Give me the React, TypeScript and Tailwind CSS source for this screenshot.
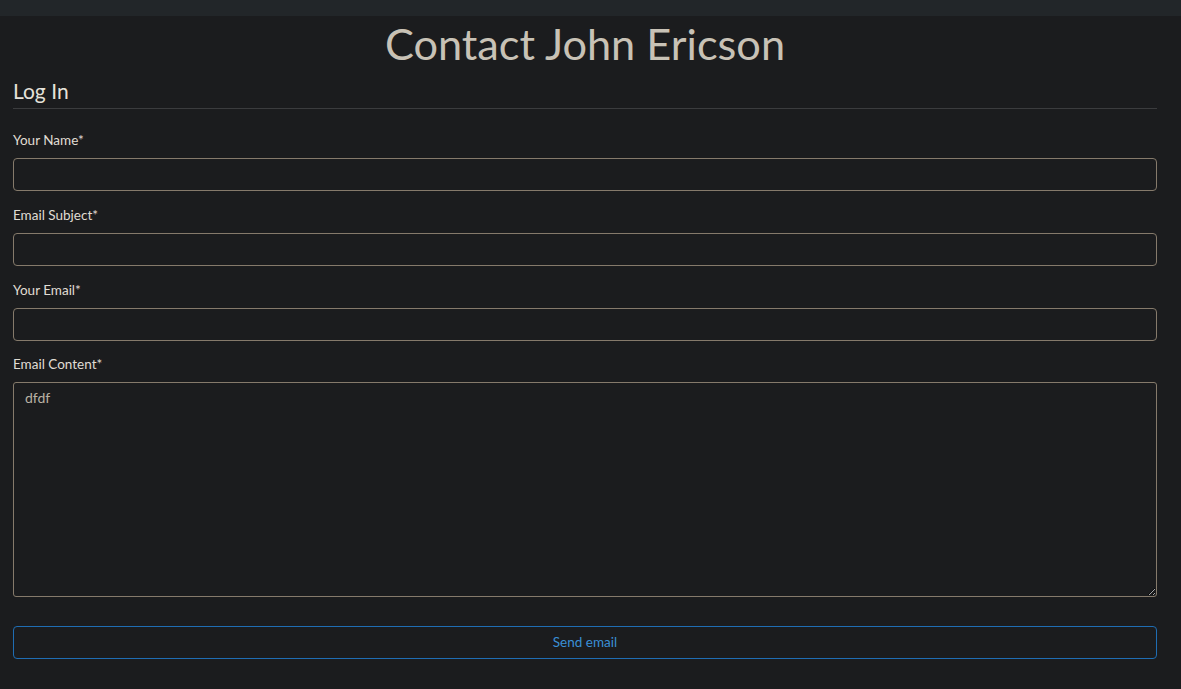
import React from 'react'

const fields = [
  { id: 'name', label: 'Your Name', gap: 'mb-[16px]' },
  { id: 'subject', label: 'Email Subject', gap: 'mb-[16px]' },
  { id: 'email', label: 'Your Email', gap: 'mb-[15px]' },
]

export default function App() {
  return (
    <div
      className="min-h-[689px] bg-[#1b1c1e] text-[#d8d4cc]"
      style={{ fontFamily: 'Lato, "Noto Sans", sans-serif' }}
    >
      <div className="h-4 bg-[#222629]" />
      <div className="pl-[13px] pr-[24px]">
        <h1 className="text-center text-[43.3px] leading-[54px] font-normal text-[#c8c2b6]">Contact John Ericson</h1>
        <h2 className="mt-[8px] text-[21px] leading-[26px] text-[#e6e2da] pb-[4px] border-b border-[#3b3c3e]">Log In</h2>

        <form className="pt-[23px]" onSubmit={(e) => e.preventDefault()}>
          {fields.map((f) => (
            <div key={f.id} className={f.gap}>
              <label htmlFor={f.id} className="block text-[13.5px] leading-[16px] text-[#e0dcd4]">
                {f.label}*
              </label>
              <input
                id={f.id}
                className="mt-[10px] block h-[33px] w-full rounded-[4px] border border-[#857a6b] bg-[#1b1c1e] px-3 text-[13px] text-[#c8c2b6] outline-none"
              />
            </div>
          ))}
          <div>
            <label htmlFor="content" className="block text-[13.5px] leading-[16px] text-[#e0dcd4]">
              Email Content*
            </label>
            <textarea
              id="content"
              defaultValue="dfdf"
              className="mt-[10px] block h-[215px] w-full rounded-[3px] border border-[#857a6b] bg-[#1b1c1e] px-[11px] py-[5px] text-[14px] leading-[20px] text-[#b9b2a4] outline-none"
            />
          </div>
          <button
            type="submit"
            className="mt-[29px] block h-[33px] w-full rounded-[4px] border border-[#1f6db3] bg-transparent text-[13.5px] text-[#3a8fd6]"
          >
            Send email
          </button>
        </form>
      </div>
    </div>
  )
}
